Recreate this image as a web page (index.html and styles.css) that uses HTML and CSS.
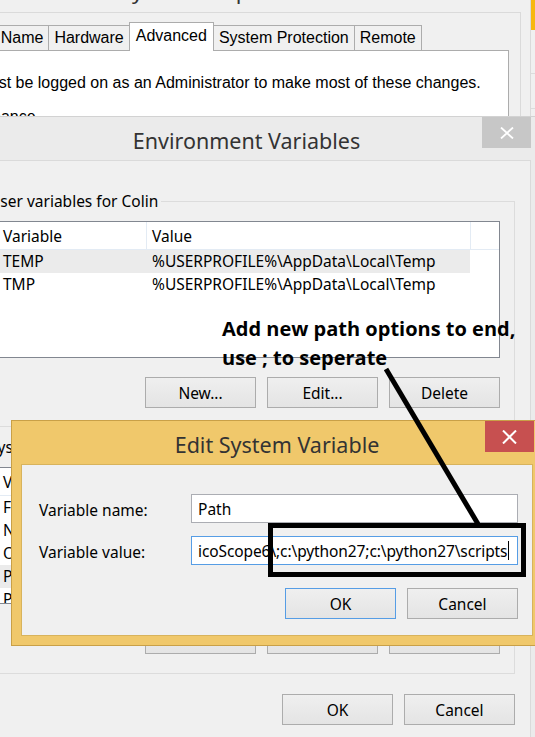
FILE: index.html
```html
<!DOCTYPE html>
<html lang="en">
<head>
<meta charset="utf-8">
<title>Environment Variables</title>
<link rel="stylesheet" href="styles.css">
</head>
<body>
<div class="bgwin">
  <div class="bg-accent"></div>
  <div class="bg-gap"></div>
  <div class="bg-line"></div>
  <div class="bg-line"></div>
</div>

<div class="win sysprops">
  <div class="sp-title"><span>System Properties</span></div>
  <div class="sp-frame">
    <div class="tabs">
      <div class="tab">Computer Name</div>
      <div class="tab">Hardware</div>
      <div class="tab active">Advanced</div>
      <div class="tab">System Protection</div>
      <div class="tab">Remote</div>
    </div>
    <div class="tab-panel">
      <p class="sp-note">You must be logged on as an Administrator to make most of these changes.</p>
      <p class="sp-note sp-group">Performance</p>
    </div>
  </div>
</div>

<div class="win envvars">
  <div class="titlebar">
    <span class="title">Environment Variables</span>
    <div class="close inactive"><svg width="14" height="12" viewBox="0 0 14 12"><path d="M1 0.5L13 11.5M13 0.5L1 11.5" stroke="#fff" stroke-width="1.8" fill="none"/></svg></div>
  </div>
  <div class="client env-client">
    <fieldset class="group">
      <legend>User variables for Colin</legend>
      <div class="listview">
        <div class="lv-row lv-head"><span class="c1">Variable</span><span class="c2">Value</span><span class="c3"></span></div>
        <div class="lv-row sel"><span class="c1">TEMP</span><span class="c2">%USERPROFILE%\AppData\Local\Temp</span></div>
        <div class="lv-row"><span class="c1">TMP</span><span class="c2">%USERPROFILE%\AppData\Local\Temp</span></div>
      </div>
      <div class="btn-row">
        <button class="btn">New...</button>
        <button class="btn">Edit...</button>
        <button class="btn">Delete</button>
      </div>
    </fieldset>
    <fieldset class="group group-sys">
      <legend>System variables</legend>
      <div class="listview">
        <div class="lv-row lv-head"><span class="c1">Variable</span><span class="c2">Value</span><span class="c3"></span></div>
        <div class="lv-row"><span class="c1">FP_NO_HOST_CHECK</span><span class="c2">NO</span></div>
        <div class="lv-row"><span class="c1">NUMBER_OF_PROCESSORS</span><span class="c2">4</span></div>
        <div class="lv-row"><span class="c1">OS</span><span class="c2">Windows_NT</span></div>
        <div class="lv-row sel"><span class="c1">Path</span><span class="c2">C:\ProgramData\Oracle\Java\javapath;C:\Windows\system32</span></div>
        <div class="lv-row"><span class="c1">PATHEXT</span><span class="c2">.COM;.EXE;.BAT;.CMD;.VBS;.VBE;.JS;.JSE</span></div>
      </div>
      <div class="btn-row">
        <button class="btn">New...</button>
        <button class="btn">Edit...</button>
        <button class="btn">Delete</button>
      </div>
    </fieldset>
    <div class="btn-row dialog-btns">
      <button class="btn">OK</button>
      <button class="btn">Cancel</button>
    </div>
  </div>
</div>

<div class="win editvar">
  <div class="titlebar">
    <span class="title">Edit System Variable</span>
    <div class="close active-close"><svg width="15" height="14" viewBox="0 0 15 14"><path d="M1 0.5L14 13.5M14 0.5L1 13.5" stroke="#fff" stroke-width="2" fill="none"/></svg></div>
  </div>
  <div class="client edit-client">
    <div class="form-grid">
      <label class="lbl">Variable name:</label>
      <div class="field">Path</div>
      <label class="lbl">Variable value:</label>
      <div class="field focused">icoScope6\;c:\python27;c:\python27\scripts<span class="caret"></span></div>
    </div>
    <div class="btn-row edit-btns">
      <button class="btn default">OK</button>
      <button class="btn">Cancel</button>
    </div>
  </div>
</div>

<div class="callout">Add new path options to end,<br>use ; to seperate</div>
<svg class="marks" width="535" height="737" viewBox="0 0 535 737">
  <line x1="386" y1="369" x2="478" y2="524" stroke="#000" stroke-width="5"/>
  <rect x="270.5" y="525.5" width="253" height="49" fill="none" stroke="#000" stroke-width="5"/>
</svg>
</body>
</html>
```

FILE: styles.css
```css
* { box-sizing: border-box; }

html, body { margin: 0; padding: 0; }

body {
  width: 535px;
  height: 737px;
  overflow: hidden;
  position: relative;
  background: #f0f0f0;
  font-family: "Noto Sans", "Open Sans", sans-serif;
  font-size: 15.5px;
  color: #000;
}

.win { position: absolute; }

/* window peeking at the right edge */
.bgwin {
  position: absolute;
  left: 531px;
  top: 0;
  width: 10px;
  height: 120px;
  background: #f0f0f0;
}
.bg-accent { height: 30px; background: #f7b810; }
.bg-gap { height: 43px; }
.bg-line { height: 35px; border-top: 1px solid #dcdcdc; }

/* System Properties (behind) */
.sysprops {
  left: -92px;
  top: 0;
  width: 623px;
  height: 170px;
  background: #f0f0f0;
  border-right: 1px solid #dadada;
}
.sp-title {
  display: flow-root;
  height: 12px;
  padding-left: 212px;
  color: #333;
  font-size: 22px;
}
.sp-title span {
  display: block;
  line-height: 22px;
  margin-top: -21px;
}
.sp-frame {
  margin-right: 9px;
  border-top: 1px solid #dadada;
  border-right: 1px solid #dadada;
  padding: 9px 11px 0 7px;
  height: 158px;
}
.tabs {
  display: flex;
  align-items: flex-end;
  height: 28px;
  margin-left: 5px;
  font-family: "Liberation Sans", Arial, sans-serif;
  font-size: 16px;
}
.tab {
  height: 25px;
  padding: 0 5px;
  border: 1px solid #acacac;
  border-bottom: none;
  background: #f0f0f0;
  display: flex;
  align-items: center;
  white-space: nowrap;
}
.tab + .tab { margin-left: -1px; }
.tab.active {
  height: 29px;
  margin-bottom: -1px;
  padding: 0 6px 2px;
  background: #fff;
  position: relative;
  z-index: 1;
}
.tab-panel {
  background: #fff;
  border: 1px solid #acacac;
  height: 120px;
  padding: 22px 0 0 29px;
}
.sp-note {
  margin: 0;
  font-family: "Liberation Sans", Arial, sans-serif;
  font-size: 16px;
  line-height: 20px;
  white-space: nowrap;
}
.sp-group { margin-top: 14px; margin-left: -1px; }

/* shared dialog parts */
.titlebar {
  position: relative;
  height: 43px;
  padding-top: 4px;
  text-align: center;
  color: #333;
}
.title {
  font-size: 21.5px;
  line-height: 39px;
}
.close {
  position: absolute;
  top: 0;
  width: 49px;
  height: 31px;
  display: flex;
  align-items: center;
  justify-content: center;
}
.close svg { display: block; }
.close.inactive { background: #c7c7c7; right: 9px; }
.close.active-close { background: #c75050; right: 8px; }

.client { background: #f0f0f0; }

.btn-row {
  display: flex;
  justify-content: flex-end;
  gap: 11px;
  margin-top: 19px;
}
.btn {
  width: 111px;
  height: 31px;
  margin: 0;
  padding: 0;
  border: 1px solid #acacac;
  background: linear-gradient(#efefef, #e4e4e4);
  font-family: inherit;
  font-size: 15.5px;
  color: #000;
}

/* Environment Variables */
.envvars {
  left: -48px;
  top: 116px;
  width: 589px;
  height: 640px;
  background: #ebebeb;
  border: 1px solid #d2d2d2;
}
.env-client {
  margin: 0 9px;
  height: 600px;
  border: 1px solid #dadada;
  border-bottom: none;
  padding: 30px 15px 0 15px;
}
.group {
  margin: 0;
  min-width: 0;
  border: 1px solid #dcdcdc;
  padding: 10px 14px 18px 18px;
}
.group legend {
  margin-left: -11px;
  padding: 0 3px;
  line-height: 20px;
  white-space: nowrap;
}
.group-sys { margin-top: 10px; padding-bottom: 19px; }

.listview {
  height: 137px;
  border: 1px solid #828790;
  background: #fff;
  overflow: hidden;
}
.lv-row {
  display: grid;
  grid-template-columns: 149px 324px 1fr;
  height: 23px;
  line-height: 23px;
  white-space: nowrap;
}
.lv-row span { overflow: hidden; padding-left: 5px; }
.lv-head {
  height: 28px;
  line-height: 28px;
  border-bottom: 1px solid #e3ebf4;
}
.lv-head .c1, .lv-head .c2 { border-right: 1px solid #e3ebf4; }
.lv-row.sel .c1, .lv-row.sel .c2 { background: #ebebeb; }
.lv-row.sel .c2 { margin-right: 1px; }

.dialog-btns { margin-top: 20px; }

/* Edit System Variable */
.editvar {
  left: 11px;
  top: 420px;
  width: 532px;
  height: 226px;
  background: #f0c86b;
  border: 1px solid #c9a047;
}
.edit-client {
  margin: 0 9px;
  height: 172px;
  border: 1px solid #d8b35c;
  padding: 29px 14px 0 17px;
}
.form-grid {
  display: grid;
  grid-template-columns: 152px 327px;
  row-gap: 13px;
  align-items: center;
}
.lbl { white-space: nowrap; padding-top: 2px; }
.field {
  height: 29px;
  border: 1px solid #abadb3;
  background: #fff;
  padding: 0 6px;
  display: flex;
  align-items: center;
  white-space: nowrap;
  overflow: hidden;
}
.field.focused { border-color: #569de5; letter-spacing: -0.1px; }
.caret {
  display: inline-block;
  flex: none;
  width: 1px;
  height: 19px;
  margin-left: 1px;
  background: #000;
}
.edit-btns { margin-top: 23px; }
.btn.default { border-color: #569de5; }

/* annotation */
.callout {
  position: absolute;
  left: 222px;
  top: 314px;
  font-family: "Open Sans", "Noto Sans", sans-serif;
  font-weight: 700;
  font-size: 20px;
  line-height: 29px;
  white-space: nowrap;
  color: #000;
}
.marks {
  position: absolute;
  left: 0;
  top: 0;
  pointer-events: none;
}
```
